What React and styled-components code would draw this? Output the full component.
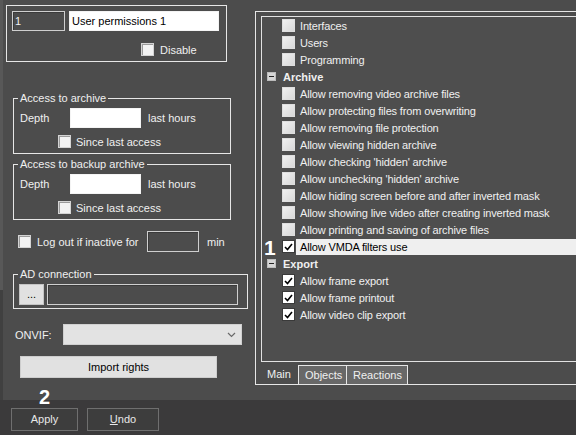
import React from 'react';
import styled, { createGlobalStyle } from 'styled-components';

const GlobalStyle = createGlobalStyle`
  html, body {
    margin: 0;
    padding: 0;
    background: #3b3b3b;
  }
  body {
    font-family: "Liberation Sans", Arial, sans-serif;
    font-size: 11px;
  }
`;

const Page = styled.div`
  position: relative;
  width: 576px;
  height: 435px;
  overflow: hidden;
  background: #4c4c4c;
  color: #f0f0f0;
  display: flex;
  flex-direction: column;
`;

const Main = styled.div`
  display: flex;
  height: 400px;
  flex: none;
`;

const Edge = styled.div`
  width: 3px;
  flex: none;
  background: linear-gradient(#585858 0, #585858 290px, #404040 290px);
`;

const LeftPane = styled.div`
  width: 247px;
  flex: none;
  padding-top: 5px;
  box-sizing: border-box;
`;

const TopBox = styled.div`
  margin-left: 3px;
  width: 221px;
  height: 57px;
  box-sizing: border-box;
  border: 1px solid #e6e6e6;
  padding: 5px 0 0 5px;
`;

const Row = styled.div`
  display: flex;
  align-items: center;
  margin-top: ${p => p.$top || 0}px;
  padding-left: ${p => p.$indent || 0}px;
  gap: ${p => p.$gap || 0}px;
`;

const Field = styled.div`
  width: ${p => p.$w}px;
  height: ${p => p.$h || 20}px;
  box-sizing: border-box;
  flex: none;
  display: flex;
  align-items: center;
  padding-left: 2px;
  background: ${p => (p.$dark ? 'transparent' : '#ffffff')};
  color: ${p => (p.$dark ? '#f0f0f0' : '#000')};
  border: 1px solid ${p => (p.$dark ? '#cfcfcf' : '#f4f4f4')};
  box-shadow: ${p => (p.$dark ? 'inset 1px 1px 0 #3a3a3a' : 'none')};
`;

const Box = styled.span`
  width: 13px;
  height: 13px;
  box-sizing: border-box;
  flex: none;
  display: inline-flex;
  align-items: center;
  justify-content: center;
  background: #f3f3f3;
  border: 1px solid #d4d4d4;
  box-shadow: inset 1px 1px 0 #9a9a9a;
  margin-right: ${p => p.$gap || 0}px;
`;

const Label = styled.span`
  width: ${p => (p.$w ? `${p.$w}px` : 'auto')};
  flex: none;
  white-space: nowrap;
`;

const Group = styled.fieldset`
  margin: ${p => p.$top}px 0 0 10px;
  width: ${p => p.$w}px;
  min-width: 0;
  box-sizing: border-box;
  border: 1px solid #e6e6e6;
  padding: 0 0 ${p => p.$bottom}px 4px;
`;

const Legend = styled.legend`
  padding: 0 2px;
  line-height: 13px;
  font-size: 11px;
`;

const DotsButton = styled.div`
  width: 25px;
  height: 21px;
  flex: none;
  box-sizing: border-box;
  background: #e1e1e1;
  border: 1px solid #c4c4c4;
  color: #000;
  text-align: center;
  line-height: 19px;
  margin-left: 1px;
`;

const Select = styled.div`
  width: 179px;
  height: 21px;
  box-sizing: border-box;
  background: #e3e3e3;
  border: 1px solid #d0d0d0;
  display: flex;
  align-items: center;
  justify-content: flex-end;
  padding-right: 5px;
`;

const LightButton = styled.div`
  width: 197px;
  height: 22px;
  box-sizing: border-box;
  margin: 11px 0 0 17px;
  background: #e1e1e1;
  border: 1px solid #cdcdcd;
  color: #000;
  text-align: center;
  line-height: 20px;
`;

const RightPane = styled.div`
  flex: 1;
  min-width: 0;
  padding: 11px 0 0 5px;
`;

const TabBox = styled.div`
  width: 340px;
  height: 374px;
  box-sizing: border-box;
  border: 1px solid #e6e6e6;
  border-right: none;
  display: flex;
  flex-direction: column;
`;

const TreeBox = styled.div`
  margin: 4px 0 0 5px;
  height: 346px;
  flex: none;
  box-sizing: border-box;
  border: 1px solid #e2e2e2;
  border-right: none;
  background: #4e4e4e;
  overflow: hidden;
`;

const TreeRow = styled.div`
  position: relative;
  display: flex;
  align-items: center;
  height: 17px;
  padding-left: ${p => (p.$header ? 5 : 20)}px;
`;

const TreeCheck = styled.span`
  width: 13px;
  height: 13px;
  box-sizing: border-box;
  flex: none;
  margin-right: 1px;
  display: inline-flex;
  align-items: center;
  justify-content: center;
  background: ${p => (p.$checked ? '#ffffff' : 'linear-gradient(135deg, #f0f0f0, #d8d8d8)')};
  border: 1px solid ${p => (p.$checked ? '#3a3a3a' : '#dedede')};
`;

const Expander = styled.span`
  width: 9px;
  height: 9px;
  box-sizing: border-box;
  flex: none;
  margin-right: 3px;
  border: 1px solid #bcbcbc;
  background: #d6d6d6;
  display: inline-flex;
  align-items: center;
  justify-content: center;
  &::after {
    content: '';
    width: 5px;
    height: 1px;
    background: #222;
  }
`;

const TreeLabel = styled.span`
  flex: 1;
  height: 16px;
  line-height: 16px;
  margin-top: 1px;
  padding-left: 4px;
  white-space: nowrap;
  letter-spacing: ${p => (p.$header ? 0 : -0.15)}px;
  font-weight: ${p => (p.$header ? 'bold' : 'normal')};
  background: ${p => (p.$selected ? '#efefef' : 'transparent')};
  color: ${p => (p.$selected ? '#000' : '#f0f0f0')};
`;

const Marker = styled.span`
  position: absolute;
  left: ${p => p.$left}px;
  top: ${p => p.$top}px;
  font-size: ${p => p.$size}px;
  line-height: ${p => p.$size}px;
  font-weight: bold;
  color: #ffffff;
`;

const TabStrip = styled.div`
  display: flex;
  margin-top: 3px;
  height: 19px;
  flex: none;
`;

const Tab = styled.div`
  box-sizing: border-box;
  height: 19px;
  width: ${p => p.$w}px;
  padding-left: ${p => p.$pad}px;
  line-height: 18px;
  color: #f0f0f0;
  background: ${p => (p.$active ? 'transparent' : '#686868')};
  border-top: ${p => (p.$active ? 'none' : '1px solid #e6e6e6')};
  border-left: ${p => (p.$first ? '1px solid #e6e6e6' : 'none')};
  border-right: ${p => (p.$active ? 'none' : '1px solid #e6e6e6')};
`;

const BottomBar = styled.div`
  flex: 1;
  background: #3b3a3b;
  display: flex;
  gap: 9px;
  padding: 8px 0 0 11px;
  box-sizing: border-box;
`;

const BarButton = styled.div`
  width: ${p => p.$w}px;
  height: 23px;
  box-sizing: border-box;
  border: 1px solid #6f6f6f;
  background: #3d3d3d;
  color: #e8e8e8;
  text-align: center;
  line-height: 21px;
  u {
    text-decoration: underline;
  }
`;

const Tick = () => (
  <svg width="9" height="8" viewBox="0 0 9 8">
    <path d="M1 4 L3.5 6.5 L8 1" fill="none" stroke="#000" strokeWidth="1.6" />
  </svg>
);

const Chevron = () => (
  <svg width="9" height="6" viewBox="0 0 9 6">
    <path d="M1 1 L4.5 4.5 L8 1" fill="none" stroke="#6a6a6a" strokeWidth="1.2" />
  </svg>
);

const tree = [
  { text: 'Interfaces' },
  { text: 'Users' },
  { text: 'Programming' },
  { text: 'Archive', header: true },
  { text: 'Allow removing video archive files' },
  { text: 'Allow protecting files from overwriting' },
  { text: 'Allow removing file protection' },
  { text: 'Allow viewing hidden archive' },
  { text: "Allow checking 'hidden' archive" },
  { text: "Allow unchecking 'hidden' archive" },
  { text: 'Allow hiding screen before and after inverted mask' },
  { text: 'Allow showing live video after creating inverted mask' },
  { text: 'Allow printing and saving of archive files' },
  { text: 'Allow VMDA filters use', checked: true, selected: true, marker: '1' },
  { text: 'Export', header: true },
  { text: 'Allow frame export', checked: true },
  { text: 'Allow frame printout', checked: true },
  { text: 'Allow video clip export', checked: true },
];

const DepthGroup = ({ title, top }) => (
  <Group $top={top} $w={218} $bottom={5}>
    <Legend>{title}</Legend>
    <Row $top={3} $indent={2}>
      <Label $w={50}>Depth</Label>
      <Field $w={71} />
      <Label style={{ marginLeft: 7 }}>last hours</Label>
    </Row>
    <Row $top={7} $indent={40}>
      <Box $gap={5} />
      <Label>Since last access</Label>
    </Row>
  </Group>
);

const App = () => (
  <Page>
    <GlobalStyle />
    <Main>
      <Edge />
      <LeftPane>
        <TopBox>
          <Row $gap={4}>
            <Field $w={53} $dark>1</Field>
            <Field $w={150}>User permissions 1</Field>
          </Row>
          <Row $top={12} $indent={129}>
            <Box $gap={6} />
            <Label>Disable</Label>
          </Row>
        </TopBox>

        <DepthGroup title="Access to archive" top={30} />
        <DepthGroup title="Access to backup archive" top={4} />

        <Row $top={11} $indent={15}>
          <Box $gap={6} />
          <Label $w={110}>Log out if inactive for</Label>
          <Field $w={52} $h={21} $dark />
          <Label style={{ marginLeft: 8 }}>min</Label>
        </Row>

        <Group $top={16} $w={235} $bottom={3}>
          <Legend>AD connection</Legend>
          <Row $top={3} $gap={3}>
            <DotsButton>...</DotsButton>
            <Field $w={191} $h={21} $dark />
          </Row>
        </Group>

        <Row $top={15} $indent={12}>
          <Label $w={48}>ONVIF:</Label>
          <Select>
            <Chevron />
          </Select>
        </Row>

        <LightButton>Import rights</LightButton>
      </LeftPane>

      <RightPane>
        <TabBox>
          <TreeBox>
            {tree.map(item => (
              <TreeRow key={item.text} $header={item.header}>
                {item.marker && (
                  <Marker $left={2} $top={-1} $size={21}>
                    {item.marker}
                  </Marker>
                )}
                {item.header ? (
                  <Expander />
                ) : (
                  <TreeCheck $checked={item.checked}>{item.checked && <Tick />}</TreeCheck>
                )}
                <TreeLabel $header={item.header} $selected={item.selected}>
                  {item.text}
                </TreeLabel>
              </TreeRow>
            ))}
          </TreeBox>
          <TabStrip>
            <Tab $active $w={42} $pad={11}>Main</Tab>
            <Tab $first $w={49} $pad={6}>Objects</Tab>
            <Tab $w={61} $pad={6}>Reactions</Tab>
          </TabStrip>
        </TabBox>
      </RightPane>
    </Main>

    <BottomBar>
      <BarButton $w={67}>Apply</BarButton>
      <BarButton $w={72}>
        <u>U</u>ndo
      </BarButton>
    </BottomBar>

    <Marker $left={39} $top={387} $size={20}>
      2
    </Marker>
  </Page>
);

export default App;
